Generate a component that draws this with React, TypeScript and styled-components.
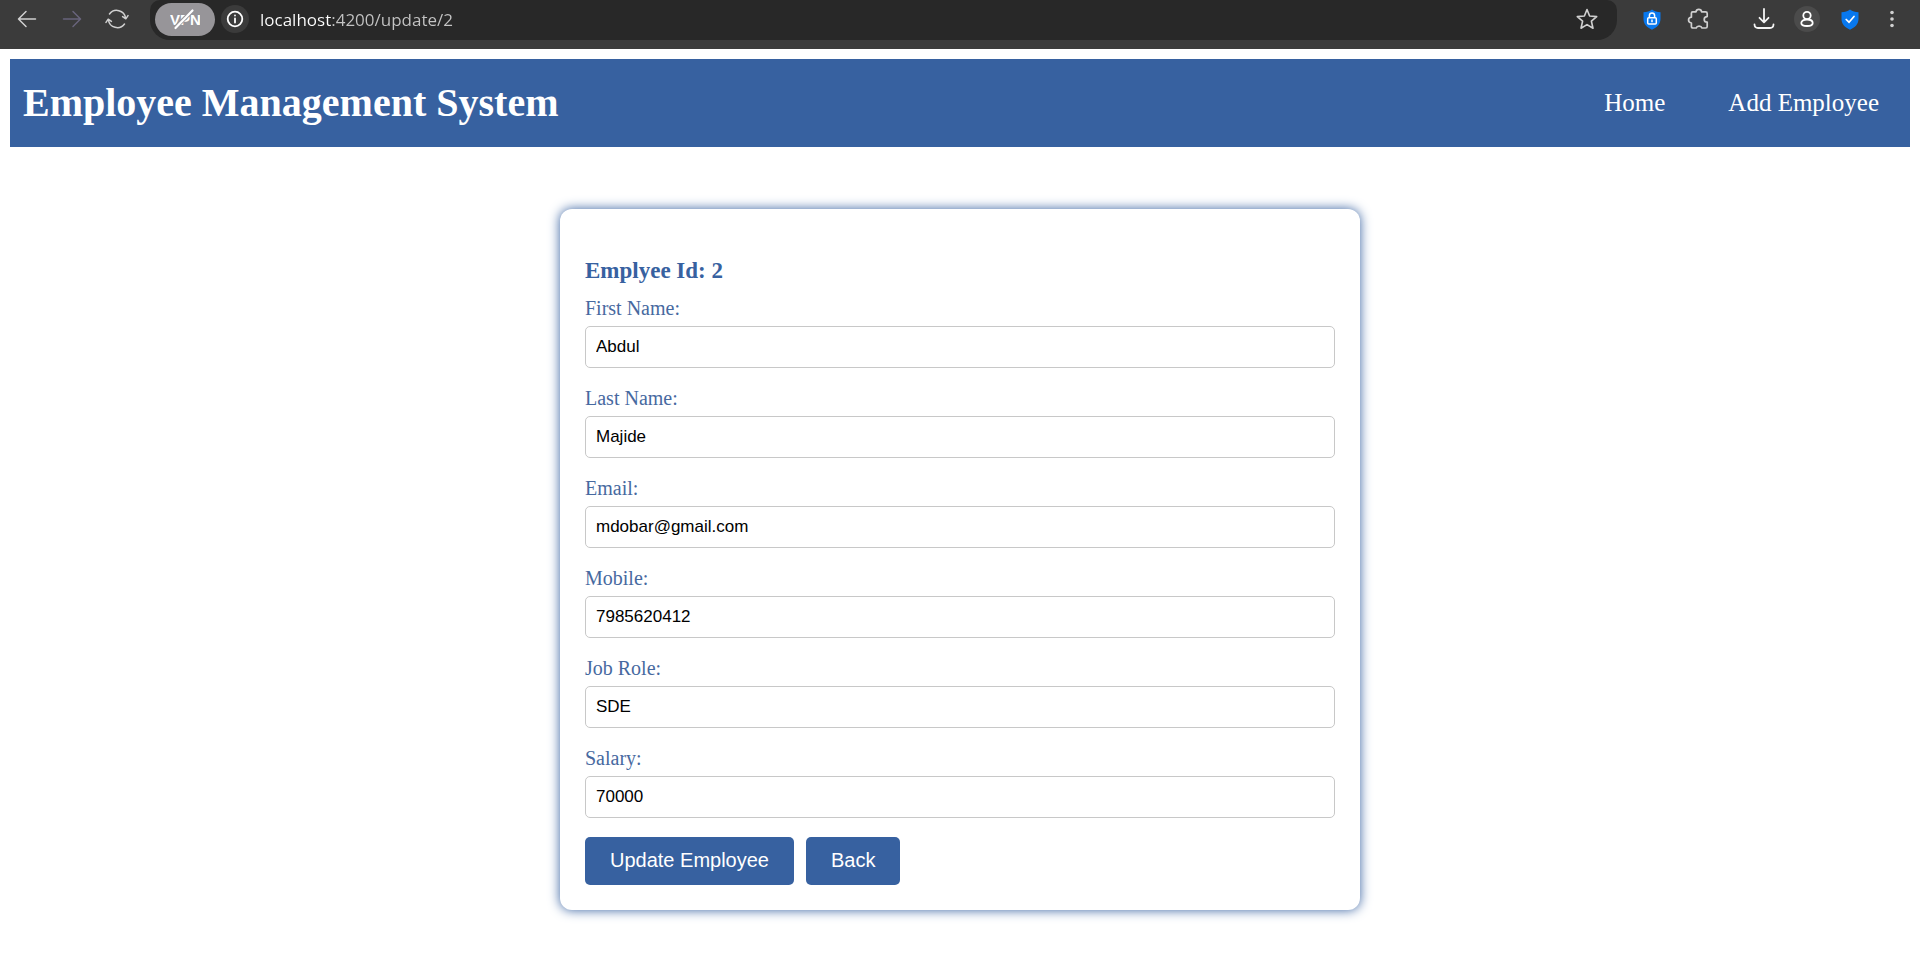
import React from "react";
import styled, { createGlobalStyle } from "styled-components";

const blue = "#3761a0";

const GlobalStyle = createGlobalStyle`
  *, *::before, *::after { box-sizing: border-box; }
  body {
    margin: 0;
    background: #ffffff;
    font-family: "Liberation Serif", "Times New Roman", serif;
  }
`;

const BrowserBar = styled.header`
  display: flex;
  align-items: flex-start;
  height: 49px;
  background: #3b3b3b;
  color: #e4e4e4;
`;

const IconButton = styled.button<{ $dim?: boolean; $round?: boolean; $width?: number }>`
  display: flex;
  flex: none;
  align-items: center;
  justify-content: center;
  width: ${(p) => p.$width ?? 28}px;
  height: ${(p) => p.$width ?? 28}px;
  padding: 0;
  border: 0;
  border-radius: 50%;
  background: ${(p) => (p.$round ? "#4b4b4b" : "transparent")};
  color: ${(p) => (p.$dim ? "#68647c" : "#d0d0d0")};
`;

const BrowserActions = styled.nav<{ $gap: number; $left: number; $right: number }>`
  display: flex;
  flex: none;
  align-items: center;
  gap: ${(p) => p.$gap}px;
  height: 38px;
  padding: 0 ${(p) => p.$right}px 0 ${(p) => p.$left}px;
`;

const ExtensionGroup = styled.div`
  display: flex;
  align-items: center;
  gap: 18px;
  margin-right: 22px;
`;

const AddressBar = styled.div`
  display: flex;
  flex: 1;
  align-items: center;
  gap: 6px;
  height: 40px;
  padding: 0 16px 2px 5px;
  border-radius: 10px 10px 20px 20px;
  background: #282828;
`;

const VpnButton = styled.button`
  display: flex;
  align-items: center;
  justify-content: center;
  width: 60px;
  height: 33px;
  padding: 0;
  border: 0;
  border-radius: 17px;
  background: #979599;
  color: #ffffff;
`;

const SiteInfo = styled(IconButton)`
  background: #3b3b3b;
  color: #ffffff;
`;

/* The host part of the address is white, the port and path are grey. */
const UrlInput = styled.input`
  flex: 1;
  min-width: 0;
  height: 28px;
  padding: 0 0 0 5px;
  border: 0;
  outline: 0;
  background: linear-gradient(to right, #ffffff 77px, #c4c4c4 77px);
  background-clip: text;
  -webkit-background-clip: text;
  color: transparent;
  font: 17px "Open Sans", "Segoe UI", sans-serif;
`;

const Page = styled.div`
  padding: 10px;
`;

const SiteHeader = styled.header`
  display: flex;
  align-items: center;
  justify-content: space-between;
  height: 88px;
  padding: 0 31px 0 13px;
  background: ${blue};
  color: #ffffff;
`;

const SiteTitle = styled.h1`
  margin: 0;
  font-size: 40px;
  line-height: 46px;
`;

const SiteNav = styled.nav`
  display: flex;
  gap: 63px;
`;

const NavLink = styled.a`
  color: #ffffff;
  font-size: 25px;
  line-height: 28px;
  text-decoration: none;
`;

const Card = styled.form`
  width: 800px;
  max-width: 100%;
  margin: 62px auto 40px;
  padding: 48px 25px 25px;
  border-radius: 12px;
  background: #ffffff;
  box-shadow: 0 0 12px ${blue};
`;

const CardTitle = styled.h3`
  margin: 0 0 13px;
  color: ${blue};
  font-size: 23px;
  line-height: 27px;
`;

const Field = styled.div`
  display: flex;
  flex-direction: column;
  gap: 6px;
  margin-bottom: 19px;
`;

const Label = styled.label`
  color: #47699f;
  font-size: 20px;
  line-height: 23px;
`;

const TextInput = styled.input`
  width: 100%;
  height: 42px;
  padding: 0 10px;
  border: 1px solid #c8c8c8;
  border-radius: 5px;
  background: #ffffff;
  color: #000000;
  font: 17px "Liberation Sans", Arial, sans-serif;
`;

const Buttons = styled.div`
  display: flex;
  gap: 12px;
`;

const Button = styled.button`
  height: 48px;
  padding: 0 25px 2px;
  border: 0;
  border-radius: 5px;
  background: ${blue};
  color: #ffffff;
  font: 20px "Liberation Sans", Arial, sans-serif;
`;

const fields = [
  { id: "firstName", label: "First Name:", value: "Abdul", type: "text" },
  { id: "lastName", label: "Last Name:", value: "Majide", type: "text" },
  { id: "email", label: "Email:", value: "mdobar@gmail.com", type: "email" },
  { id: "mobile", label: "Mobile:", value: "7985620412", type: "tel" },
  { id: "role", label: "Job Role:", value: "SDE", type: "text" },
  { id: "salary", label: "Salary:", value: "70000", type: "text" },
];

const stroke = {
  fill: "none",
  stroke: "currentColor",
  strokeLinecap: "round" as const,
  strokeLinejoin: "round" as const,
};

const BackIcon = () => (
  <svg width="20" height="20" viewBox="0 0 20 20" {...stroke} strokeWidth="1.5">
    <path d="M18.5 10H2M9 2.5L1.5 10L9 17.5" />
  </svg>
);

const ForwardIcon = () => (
  <svg width="20" height="20" viewBox="0 0 20 20" {...stroke} strokeWidth="1.5">
    <path d="M1.5 10H18M11 2.5L18.5 10L11 17.5" />
  </svg>
);

const ReloadIcon = () => (
  <svg width="24" height="22" viewBox="0 0 24 22" {...stroke} strokeWidth="1.5">
    <path d="M4.5 6A9 9 0 0 1 20.6 10M17.6 8.6L20.8 10.8L23 7.6" />
    <path d="M19.5 16A9 9 0 0 1 3.4 12M6.4 13.4L3.2 11.2L1 14.4" />
  </svg>
);

const VpnIcon = () => (
  <svg width="30" height="22" viewBox="0 0 30 22" {...stroke} strokeWidth="2.2">
    <text
      x="0"
      y="17"
      fill="#ffffff"
      stroke="none"
      fontFamily='"Liberation Sans", Arial, sans-serif'
      fontSize="15"
      fontWeight="700"
    >
      VPN
    </text>
    <path d="M5 20L22.5 2.5" stroke="#979599" strokeWidth="4" strokeLinecap="butt" />
    <path d="M5.5 20L22.5 2.5" />
  </svg>
);

const InfoIcon = () => (
  <svg width="18" height="18" viewBox="0 0 18 18" {...stroke} strokeWidth="1.8">
    <circle cx="9" cy="9" r="7.3" />
    <path d="M9 8.5V12.5M9 5.5V5.6" />
  </svg>
);

const StarIcon = () => (
  <svg width="22" height="22" viewBox="0 0 22 22" {...stroke} strokeWidth="1.6">
    <path d="M11 1.5L13.6 8L20.7 8.6L15.4 13.2L17 20.2L11 16.6L5 20.2L6.6 13.2L1.3 8.6L8.4 8Z" />
  </svg>
);

const shieldPath =
  "M9 0.5C11.5 2.3 14 3 17.5 3.2V10C17.5 15 14 18.6 9 20.7C4 18.6 0.5 15 0.5 10V3.2C4 3 6.5 2.3 9 0.5Z";

const LockShieldIcon = () => (
  <svg width="18" height="21" viewBox="0 0 18 21" fill="none">
    <path d={shieldPath} fill="#0878ee" />
    <rect x="4.7" y="8.7" width="8.6" height="6.2" rx="1" stroke="#fff" strokeWidth="1.5" />
    <path d="M6.4 8.5V6.5A2.6 2.6 0 0 1 11.6 6.5V8.5M9 10.6V13.2" stroke="#fff" strokeWidth="1.5" />
  </svg>
);

const CheckShieldIcon = () => (
  <svg width="18" height="21" viewBox="0 0 18 21" fill="none">
    <path d={shieldPath} fill="#0878ee" />
    <path d="M5.2 10.5L8 13.2L13 7.5" stroke="#fff" strokeWidth="1.7" strokeLinecap="round" />
  </svg>
);

const PuzzleIcon = () => (
  <svg width="22" height="22" viewBox="0 0 22 22" {...stroke} strokeWidth="1.7">
    <path d="M5.7 3.8H9C9.4 0.6 14.2 0.6 14.6 3.8H18.6Q20.2 3.8 20.2 5.4V8.6C16.2 8.8 16.2 14 20.2 14.2V18.4Q20.2 20 18.6 20H15C14.2 17.4 10 17.4 9.2 20H6Q4.4 20 4.4 18.4V15C0.6 14.6 0.6 9.6 4.4 9.2V5.2Q4.4 3.8 5.7 3.8Z" />
  </svg>
);

const DownloadIcon = () => (
  <svg width="22" height="22" viewBox="0 0 22 22" {...stroke} stroke="#f4f4f4" strokeWidth="1.8">
    <path d="M11 1V14M6.5 9.8L11 14.3L15.5 9.8M1.5 16.5Q1.7 20 5 20H17Q20.3 20 20.5 16.5" />
  </svg>
);

const ProfileIcon = () => (
  <svg width="16" height="18" viewBox="0 0 16 18" {...stroke} stroke="#fff" strokeWidth="1.8">
    <circle cx="8" cy="5.5" r="3.7" />
    <path d="M8 9.5C4.5 9.5 2.3 11 2.3 13C2.3 15 4.5 16 8 16S13.7 15 13.7 13C13.7 11 11.5 9.5 8 9.5Z" />
  </svg>
);

const MenuIcon = () => (
  <svg width="6" height="18" viewBox="0 0 6 18" fill="currentColor">
    <circle cx="3" cy="2.5" r="1.8" />
    <circle cx="3" cy="9" r="1.8" />
    <circle cx="3" cy="15.5" r="1.8" />
  </svg>
);

export default function App() {
  return (
    <>
      <GlobalStyle />
      <BrowserBar>
        <BrowserActions $gap={17} $left={13} $right={19}>
          <IconButton aria-label="Back to previous page"><BackIcon /></IconButton>
          <IconButton aria-label="Forward" $dim><ForwardIcon /></IconButton>
          <IconButton aria-label="Reload"><ReloadIcon /></IconButton>
        </BrowserActions>
        <AddressBar>
          <VpnButton aria-label="VPN"><VpnIcon /></VpnButton>
          <SiteInfo aria-label="Site information"><InfoIcon /></SiteInfo>
          <UrlInput aria-label="Address" defaultValue="localhost:4200/update/2" spellCheck={false} />
          <IconButton aria-label="Bookmark"><StarIcon /></IconButton>
        </AddressBar>
        <BrowserActions $gap={16} $left={21} $right={16}>
          <ExtensionGroup>
            <IconButton aria-label="Privacy"><LockShieldIcon /></IconButton>
            <IconButton aria-label="Extensions"><PuzzleIcon /></IconButton>
          </ExtensionGroup>
          <IconButton aria-label="Downloads"><DownloadIcon /></IconButton>
          <IconButton aria-label="Profile" $round $width={26}><ProfileIcon /></IconButton>
          <IconButton aria-label="Protection"><CheckShieldIcon /></IconButton>
          <IconButton aria-label="Menu" $width={24}><MenuIcon /></IconButton>
        </BrowserActions>
      </BrowserBar>
      <Page>
        <SiteHeader>
          <SiteTitle>Employee Management System</SiteTitle>
          <SiteNav>
            <NavLink href="#home">Home</NavLink>
            <NavLink href="#add">Add Employee</NavLink>
          </SiteNav>
        </SiteHeader>
        <Card onSubmit={(e) => e.preventDefault()}>
          <CardTitle>Emplyee Id: 2</CardTitle>
          {fields.map((f) => (
            <Field key={f.id}>
              <Label htmlFor={f.id}>{f.label}</Label>
              <TextInput id={f.id} type={f.type} defaultValue={f.value} />
            </Field>
          ))}
          <Buttons>
            <Button type="submit">Update Employee</Button>
            <Button type="button">Back</Button>
          </Buttons>
        </Card>
      </Page>
    </>
  );
}
